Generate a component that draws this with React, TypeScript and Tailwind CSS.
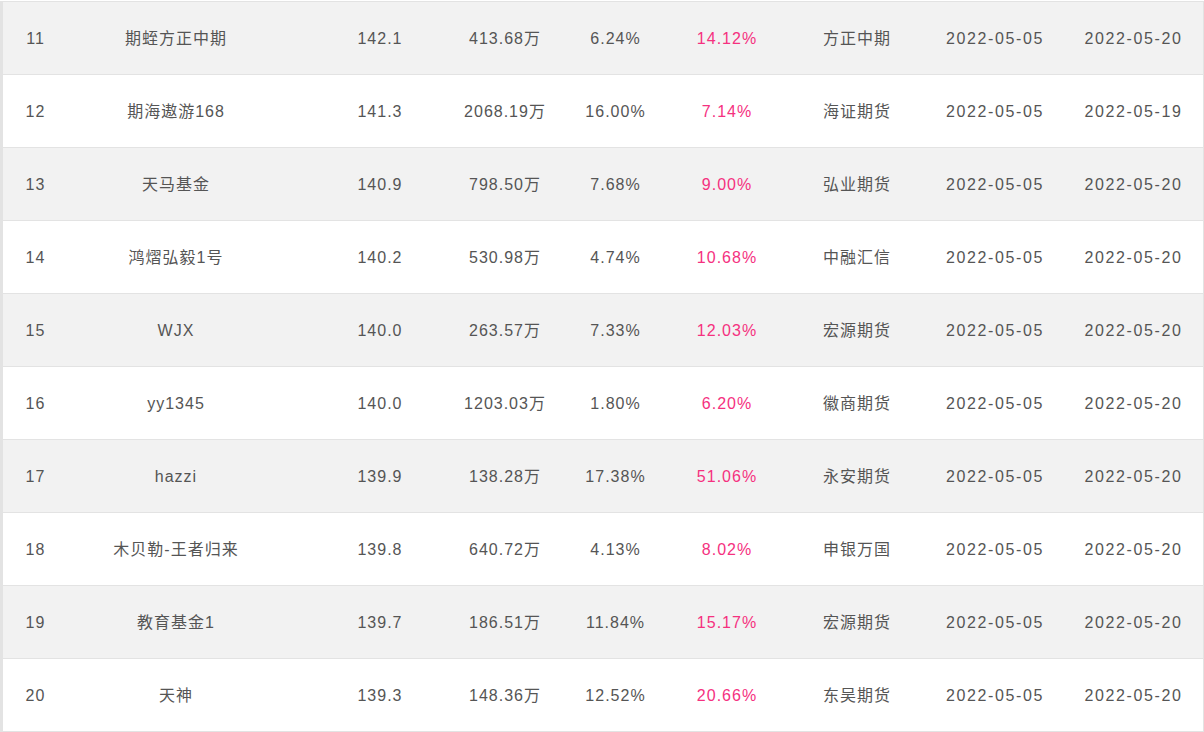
const rows = [
  { rank: 11, name: '期蛭方正中期', score: '142.1', equity: '413.68万', drawdown: '6.24%', profit: '14.12%', broker: '方正中期', start: '2022-05-05', end: '2022-05-20' },
  { rank: 12, name: '期海遨游168', score: '141.3', equity: '2068.19万', drawdown: '16.00%', profit: '7.14%', broker: '海证期货', start: '2022-05-05', end: '2022-05-19' },
  { rank: 13, name: '天马基金', score: '140.9', equity: '798.50万', drawdown: '7.68%', profit: '9.00%', broker: '弘业期货', start: '2022-05-05', end: '2022-05-20' },
  { rank: 14, name: '鸿熠弘毅1号', score: '140.2', equity: '530.98万', drawdown: '4.74%', profit: '10.68%', broker: '中融汇信', start: '2022-05-05', end: '2022-05-20' },
  { rank: 15, name: 'WJX', score: '140.0', equity: '263.57万', drawdown: '7.33%', profit: '12.03%', broker: '宏源期货', start: '2022-05-05', end: '2022-05-20' },
  { rank: 16, name: 'yy1345', score: '140.0', equity: '1203.03万', drawdown: '1.80%', profit: '6.20%', broker: '徽商期货', start: '2022-05-05', end: '2022-05-20' },
  { rank: 17, name: 'hazzi', score: '139.9', equity: '138.28万', drawdown: '17.38%', profit: '51.06%', broker: '永安期货', start: '2022-05-05', end: '2022-05-20' },
  { rank: 18, name: '木贝勒-王者归来', score: '139.8', equity: '640.72万', drawdown: '4.13%', profit: '8.02%', broker: '申银万国', start: '2022-05-05', end: '2022-05-20' },
  { rank: 19, name: '教育基金1', score: '139.7', equity: '186.51万', drawdown: '11.84%', profit: '15.17%', broker: '宏源期货', start: '2022-05-05', end: '2022-05-20' },
  { rank: 20, name: '天神', score: '139.3', equity: '148.36万', drawdown: '12.52%', profit: '20.66%', broker: '东吴期货', start: '2022-05-05', end: '2022-05-20' },
]

const cell = 'flex items-center justify-center whitespace-nowrap pt-[2px]'

export default function App() {
  return (
    <div
      className="w-[1204px] h-[732px] bg-white pt-px text-[16px] tracking-[1px] text-[#555]"
      style={{ fontFamily: '"Liberation Sans", "Noto Sans CJK SC", sans-serif' }}
    >
      <div className="border-t border-l-[3px] border-r border-[#e3e3e3]">
        {rows.map((r, i) => (
          <div
            key={r.rank}
            className={`grid grid-cols-[102px_173px_164px_118px_111px_121px_134px_138px_139px] h-[73px] border-b border-[#e3e3e3] ${
              i % 2 === 0 ? 'bg-[#f2f2f2]' : 'bg-white'
            }`}
          >
            <div className={`${cell} pr-[37px]`}>{r.rank}</div>
            <div className={`${cell} pr-[31px]`}>{r.name}</div>
            <div className={`${cell} pl-[40px]`}>{r.score}</div>
            <div className={`${cell} pl-[8px]`}>{r.equity}</div>
            <div className={cell}>{r.drawdown}</div>
            <div className={`${cell} pr-[9px] text-[#f5317f]`}>{r.profit}</div>
            <div className={`${cell} pr-[4px]`}>{r.broker}</div>
            <div className={`${cell} tracking-[1.6px]`}>{r.start}</div>
            <div className={`${cell} tracking-[1.6px]`}>{r.end}</div>
          </div>
        ))}
      </div>
    </div>
  )
}
